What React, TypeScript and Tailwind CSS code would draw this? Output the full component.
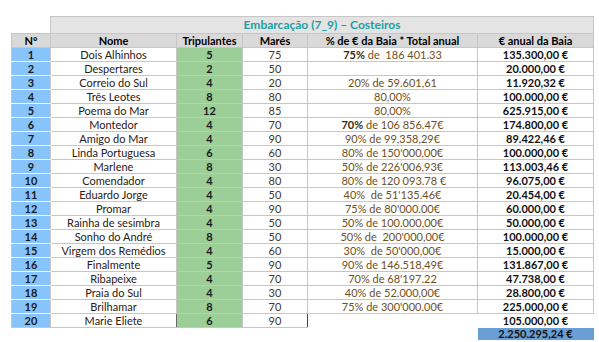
import React from 'react';

type Row = {
  n: number;
  nome: string;
  trip: number;
  mares: number;
  pct: React.ReactNode;
  euro: string;
  line?: boolean; // darker separator above
};

const ROWS: Row[] = [
  { n: 1, nome: 'Dois Alhinhos', trip: 5, mares: 75, pct: <><b className="text-[#3a2a14]">75%</b> de  186 401.33</>, euro: '135.300,00 €' },
  { n: 2, nome: 'Despertares', trip: 2, mares: 50, pct: '', euro: '20.000,00 €' },
  { n: 3, nome: 'Correio do Sul', trip: 4, mares: 20, pct: '20% de 59.601,61', euro: '11.920,32 €' },
  { n: 4, nome: 'Três Leotes', trip: 8, mares: 80, pct: '80,00%', euro: '100.000,00 €' },
  { n: 5, nome: 'Poema do Mar', trip: 12, mares: 85, pct: '80,00%', euro: '625.915,00 €', line: true },
  { n: 6, nome: 'Montedor', trip: 4, mares: 70, pct: <><b className="text-[#3a2a14]">70%</b> de 106 856.47€</>, euro: '174.800,00 €', line: true },
  { n: 7, nome: 'Amigo do Mar', trip: 4, mares: 90, pct: '90% de 99,358,29€', euro: '89.422,46 €' },
  { n: 8, nome: 'Linda Portuguesa', trip: 6, mares: 60, pct: '80% de 150\'000,00€', euro: '100.000,00 €' },
  { n: 9, nome: 'Marlene', trip: 8, mares: 30, pct: '50% de 226\'006,93€', euro: '113.003,46 €', line: true },
  { n: 10, nome: 'Comendador', trip: 4, mares: 80, pct: '\u00a080% de 120 093.78 €', euro: '96.075,00 €' },
  { n: 11, nome: 'Eduardo Jorge', trip: 4, mares: 50, pct: '40%\u00a0 de 51\'135.46€', euro: '20.454,00 €' },
  { n: 12, nome: 'Promar', trip: 4, mares: 90, pct: '75% de 80\'000.00€', euro: '60.000,00 €' },
  { n: 13, nome: 'Rainha de sesimbra', trip: 4, mares: 50, pct: '50% de 100.000,00€', euro: '50.000,00 €' },
  { n: 14, nome: 'Sonho do André', trip: 8, mares: 50, pct: '50% de\u00a0 200\'000,00€', euro: '100.000,00 €' },
  { n: 15, nome: 'Virgem dos Remédios', trip: 4, mares: 60, pct: '30%\u00a0 de 50\'000,00€', euro: '15.000,00 €' },
  { n: 16, nome: 'Finalmente', trip: 5, mares: 90, pct: '90% de 146.518,49€', euro: '131.867,00 €', line: true },
  { n: 17, nome: 'Ribapeixe', trip: 4, mares: 70, pct: '70% de 68\'197.22', euro: '47.738,00 €' },
  { n: 18, nome: 'Praia do Sul', trip: 4, mares: 30, pct: '40% de 52.000,00€', euro: '28.800,00 €' },
  { n: 19, nome: 'Brilhamar', trip: 8, mares: 70, pct: '75% de 300\'000.00€', euro: '225.000,00 €', line: true },
];

const cell = 'h-[14px] p-0 text-center align-middle border border-[#c6c6c6]';

function App() {
  return (
    <div className="w-[599px] h-[342px] bg-white overflow-hidden pt-[16px] pl-[11px] font-['Lato','Liberation_Sans',sans-serif] text-[11px] leading-none">
      <table className="border-collapse table-fixed w-[582px]">
        <colgroup>
          <col className="w-[39px]" />
          <col className="w-[126px]" />
          <col className="w-[66px]" />
          <col className="w-[65px]" />
          <col className="w-[170px]" />
          <col className="w-[116px]" />
        </colgroup>
        <tbody>
          <tr>
            <td className="h-[17px] p-0" />
            <td colSpan={5} className="h-[17px] p-0 bg-[#e4e4e4] border border-[#c6c6c6] text-center text-[12px] font-bold text-[#1c9fa3]">
              Embarcação (7_9) – Costeiros
            </td>
          </tr>
          <tr className="bg-[#d9d9d9] font-bold text-black">
            <td className={cell}>Nº</td>
            <td className={cell}>Nome</td>
            <td className={cell}>Tripulantes</td>
            <td className={cell}>Marés</td>
            <td className={cell}>% de € da Baia * Total anual</td>
            <td className={cell}>€ anual da Baia</td>
          </tr>
          {ROWS.map((r) => {
            const top = r.line ? 'border-t-[#8a8a8a]' : '';
            return (
              <tr key={r.n}>
                <td className={`${cell} ${top} bg-[#86c4fb] font-bold text-[#1a1a1a] border-b-white border-b-dotted`}>{r.n}</td>
                <td className={`${cell} ${top} text-[#2a2016]`}>{r.nome}</td>
                <td className={`${cell} ${top} bg-[#9ccf98] font-bold text-[#1a1a1a]`}>{r.trip}</td>
                <td className={`${cell} ${top} text-[#43372a]`}>{r.mares}</td>
                <td className={`${cell} ${top} text-[#6e5024] whitespace-pre`}>{r.pct}</td>
                <td className={`${cell} ${top} font-bold text-[#111]`}>{r.euro}</td>
              </tr>
            );
          })}
          <tr>
            <td className={`${cell} border-t-[#8a8a8a] bg-[#86c4fb] font-bold text-[#1a1a1a]`}>20</td>
            <td className={`${cell} border-t-[#8a8a8a] text-[#2a2016] border-r-[#6a6a6a]`}>Marie Eliete</td>
            <td className={`${cell} border-t-[#8a8a8a] bg-[#9ccf98] font-bold text-[#1a1a1a]`}>6</td>
            <td className={`${cell} border-t-[#8a8a8a] text-[#43372a] border-r-[#444]`}>90</td>
            <td className="h-[14px] p-0 border-t border-t-[#8a8a8a]" />
            <td className="h-[14px] p-0 border-t border-t-[#8a8a8a] text-center font-bold text-[#111]">105.000,00 €</td>
          </tr>
          <tr>
            <td colSpan={5} className="h-[12px] p-0" />
            <td className="h-[12px] p-0 bg-[#6a9fd6] text-center font-bold text-[#111]">2.250.295,24 €</td>
          </tr>
        </tbody>
      </table>
    </div>
  );
}

export default App;
